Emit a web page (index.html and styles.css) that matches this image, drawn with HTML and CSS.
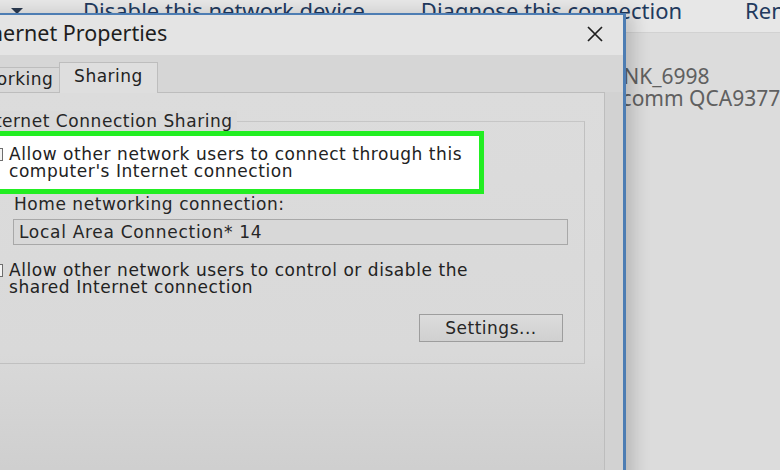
FILE: index.html
```html
<!DOCTYPE html>
<html>
<head>
<meta charset="utf-8">
<link rel="stylesheet" href="styles.css">
</head>
<body>
<div class="desktop">
  <div class="toolbar">
    <span class="tb-arrow"></span>
    <span class="tb-item tb-disable">Disable this network device</span>
    <span class="tb-item tb-diagnose">Diagnose this connection</span>
    <span class="tb-item tb-rename">Rename this connection</span>
  </div>
  <div class="details">
    <div class="detail-line detail-name">TP-LINK_6998</div>
    <div class="detail-line detail-device">Qualcomm QCA9377</div>
  </div>

  <div class="dialog">
    <div class="titlebar">
      <span class="title">Ethernet Properties</span>
      <span class="close">
        <svg width="18" height="16" viewBox="0 0 18 16"><path d="M2 1 L16 15 M16 1 L2 15" stroke="#1f1f1f" stroke-width="1.7" fill="none"/></svg>
      </span>
    </div>
    <div class="tabs">
      <div class="tab tab-networking">Networking</div>
      <div class="tab tab-active">Sharing</div>
    </div>
    <div class="panel">
      <div class="group">
        <div class="legend">Internet Connection Sharing</div>
        <div class="highlight">
          <div class="check">
            <span class="box"></span>
            <span class="check-text">Allow other network users to connect through this<br>computer's Internet connection</span>
          </div>
        </div>
        <div class="field-label">Home networking connection:</div>
        <div class="select">Local Area Connection* 14</div>
        <div class="check check-second">
          <span class="box"></span>
          <span class="check-text">Allow other network users to control or disable the<br>shared Internet connection</span>
        </div>
        <div class="actions">
          <div class="button">Settings...</div>
        </div>
      </div>
    </div>
  </div>
</div>
</body>
</html>
```

FILE: styles.css
```css
* { box-sizing: border-box; }
html, body { margin: 0; padding: 0; }
body {
  width: 780px;
  height: 470px;
  overflow: hidden;
  background: #dbdbdb;
  font-family: "DejaVu Sans", sans-serif;
}
.desktop {
  position: relative;
  width: 780px;
  height: 470px;
  overflow: hidden;
  background: #dcdcdc;
}

/* toolbar of the underlying Network Connections window */
.toolbar {
  height: 33px;
  background: #e7e7e7;
  border-bottom: 1px solid #d2d2d2;
  display: flex;
  align-items: flex-start;
  white-space: nowrap;
  overflow: hidden;
}
.tb-arrow {
  width: 0; height: 0;
  margin: 8px 0 0 11px;
  border-left: 6px solid transparent;
  border-right: 6px solid transparent;
  border-top: 6px solid #2b3a50;
}
.tb-item {
  font-family: "Noto Sans", "Open Sans", sans-serif;
  font-size: 22px;
  line-height: 24px;
  color: #223a5e;
  margin-top: -2px;
  flex: none;
}
.tb-disable { margin-left: 60px; }
.tb-diagnose { margin-left: 56px; }
.tb-rename { margin-left: 63px; }

.details {
  position: absolute;
  left: 582px;
  top: 65px;
  font-family: "Noto Sans", "Open Sans", sans-serif;
  font-size: 21px;
  line-height: 22px;
  color: #606060;
  white-space: nowrap;
}
.detail-name { margin-left: -8px; }
.detail-device { margin-left: -7px; }

/* dialog window */
.dialog {
  position: absolute;
  left: -60px;
  top: 13px;
  width: 686px;
  height: 480px;
  background: #d2d2d2;
  border-top: 2px solid #4d7db3;
  border-right: 3px solid #4d7db3;
  box-shadow: 8px 0 16px rgba(0,0,0,0.16);
  display: flex;
  flex-direction: column;
}
.titlebar {
  height: 40px;
  flex: none;
  background: #e4e4e4;
  display: flex;
  align-items: center;
  justify-content: space-between;
  padding: 0 19px 0 30px;
}
.title {
  font-family: "Noto Sans", "Open Sans", sans-serif;
  font-size: 21.5px;
  color: #1e1e1e;
  margin-top: -5px;
}
.close { display: flex; margin-top: -3px; }

.tabs {
  height: 37px;
  flex: none;
  background: #d6d6d6;
  display: flex;
  align-items: flex-end;
  padding-left: 10px;
}
.tab {
  font-size: 17px;
  letter-spacing: 0.5px;
  color: #222;
  height: 25px;
  line-height: 22px;
  border: 1px solid #bdbdbd;
  border-bottom: none;
  background: #d8d8d8;
  white-space: nowrap;
}
.tab-networking {
  width: 109px;
  text-align: right;
  padding-right: 12px;
  border-right: none;
  overflow: hidden;
}
.tab-active {
  width: 99px;
  height: 31px;
  margin-bottom: -1px;
  background: #dedede;
  text-align: center;
  line-height: 27px;
  position: relative;
  z-index: 1;
}

.panel {
  flex: 1;
  margin: 0 18px 0 10px;
  background: linear-gradient(to bottom, #dcdcdc 0, #d9d9d9 260px, #cdcdcd 100%);
  border: 1px solid #bdbdbd;
  padding: 28px 19px 0 20px;
}
.group {
  position: relative;
  border: 1px solid #c0c0c0;
  border-top-color: #c6c6c6;
  padding: 9px 0 21px 0;
}
.legend {
  position: absolute;
  left: 2px;
  top: -11px;
  padding: 0 4px;
  background: #dadada;
  font-size: 17px;
  letter-spacing: 0.55px;
  line-height: 20px;
  color: #262626;
  white-space: nowrap;
}
.highlight {
  margin-left: -60px;
  width: 572px;
  height: 63px;
  border: 5px solid #22ee22;
  background: #ffffff;
  display: flex;
  align-items: center;
  padding-left: 73px;
}
.check {
  display: flex;
  align-items: flex-start;
}
.box {
  width: 13px;
  height: 13px;
  flex: none;
  border: 1px solid #6e6e6e;
  background: #f4f4f4;
  margin-top: 2px;
  margin-right: 6px;
}
.check-text {
  font-size: 17px;
  letter-spacing: 0.55px;
  line-height: 17px;
  color: #222;
  white-space: nowrap;
}
.field-label {
  font-size: 17px;
  letter-spacing: 0.55px;
  line-height: 18px;
  color: #262626;
  margin: 1px 0 0 42px;
}
.select {
  margin: 6px 0 0 41px;
  width: 555px;
  height: 26px;
  border: 1px solid #a8a8a8;
  background: #d8d8d8;
  font-size: 17px;
  letter-spacing: 0.7px;
  line-height: 24px;
  padding-left: 5px;
  color: #262626;
}
.check-second {
  margin: 17px 0 0 18px;
}
.actions {
  display: flex;
  justify-content: flex-end;
  margin: 18px 21px 0 0;
}
.button {
  width: 144px;
  height: 28px;
  border: 1px solid #9d9d9d;
  background: linear-gradient(#dcdcdc, #d0d0d0);
  font-size: 17px;
  letter-spacing: 0.5px;
  line-height: 26px;
  text-align: center;
  color: #262626;
}
```
